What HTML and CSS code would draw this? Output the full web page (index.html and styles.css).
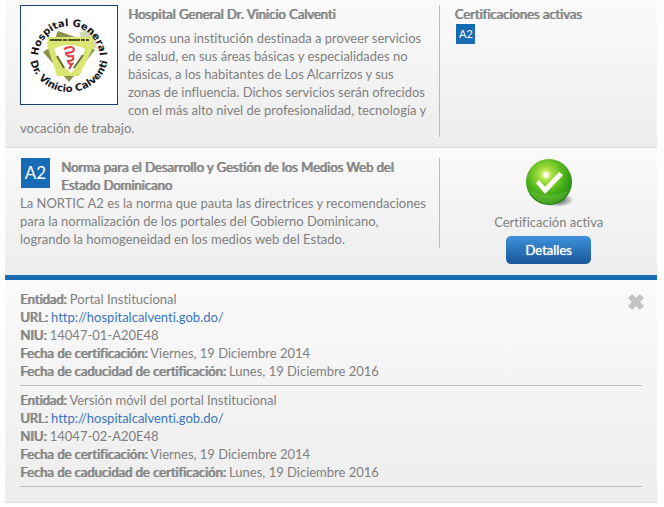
FILE: index.html
```html
<!DOCTYPE html>
<html lang="es">
<head>
    <meta charset="UTF-8">
    <meta name="viewport" content="width=device-width, initial-scale=1.0">
    <title>Hospital General Dr. Vinicio Calventi</title>
    <link rel="stylesheet" href="styles.css">
</head>
<body>

    <!-- Institution -->
    <section class="card institution">
        <div class="info">
            <svg class="logo" viewBox="0 0 96 98" role="img" aria-label="Hospital General Dr. Vinicio Calventi">
                <defs>
                    <path id="arc-top" d="M17 52 A31 32 0 1 1 79 52"/>
                    <path id="arc-bottom" d="M9 49 A39 37 0 0 0 87 49"/>
                </defs>
                <polygon points="58,26 72,24 76,42 66,44" fill="#d3d8b4"/>
                <polygon points="37,25 54,31 74,44 48,76 22,46 31,40" fill="#8b9148"/>
                <polygon points="27,31 71,31 73,40 58,70 36,70 26,39" fill="#dbe672"/>
                <path d="M33 43 Q48 35 64 43 Q60 58 50 67 Q38 58 33 43Z" fill="#fff"/>
                <path d="M43 43 Q51 39 53 43 Q53 47 45 47 Q45 51 52 50 Q54 55 47 55 Q48 59 51 58 L48 63" fill="none" stroke="#e23b42" stroke-width="2"/>
                <path d="M36 50 L43 62 M62 49 L53 62" stroke="#66702b" stroke-width="2"/>
                <path d="M29 34 H68" stroke="#4c5320" stroke-width="2" stroke-dasharray="12 1 4 1"/>
                <text class="logo-text"><textPath href="#arc-top" startOffset="50%" text-anchor="middle">Hospital General</textPath></text>
                <text class="logo-text"><textPath href="#arc-bottom" startOffset="50%" text-anchor="middle">Dr. Vinicio Calventi</textPath></text>
            </svg>
            <h2>Hospital General Dr. Vinicio Calventi</h2>
            <p>Somos una institución destinada a proveer servicios de salud, en sus áreas básicas y especialidades no básicas, a los habitantes de Los Alcarrizos y sus zonas de influencia. Dichos servicios serán ofrecidos con el más alto nivel de profesionalidad, tecnología y vocación de trabajo.</p>
        </div>
        <div class="side">
            <h2>Certificaciones activas</h2>
            <span class="badge badge-small">A2</span>
        </div>
    </section>

    <!-- Standard -->
    <section class="card norm">
        <div class="info">
            <div class="norm-title">
                <span class="badge">A2</span>
                <h2>Norma para el Desarrollo y Gestión de los Medios Web del Estado Dominicano</h2>
            </div>
            <p>La NORTIC A2 es la norma que pauta las directrices y recomendaciones para la normalización de los portales del Gobierno Dominicano, logrando la homogeneidad en los medios web del Estado.</p>
        </div>
        <div class="side status">
            <svg class="check" viewBox="0 0 50 50" aria-hidden="true">
                <defs>
                    <radialGradient id="ball" cx="0.43" cy="0.34" r="0.66">
                        <stop offset="0" stop-color="#f4ff9c"/>
                        <stop offset="0.25" stop-color="#9ddb3a"/>
                        <stop offset="0.6" stop-color="#4fb41c"/>
                        <stop offset="1" stop-color="#1f8213"/>
                    </radialGradient>
                    <radialGradient id="shade">
                        <stop offset="0" stop-color="#33363f"/>
                        <stop offset="1" stop-color="#33363f" stop-opacity="0"/>
                    </radialGradient>
                </defs>
                <ellipse cx="33" cy="42" rx="17" ry="7" fill="url(#shade)"/>
                <circle cx="25" cy="24" r="23" fill="url(#ball)"/>
                <path d="M5 32 Q25 42 45 32 Q39 45 25 46 Q11 45 5 32Z" fill="#8be04e" opacity="0.3"/>
                <circle cx="22" cy="17" r="3" fill="#fff" opacity="0.8"/>
                <path d="M12 25 L15 22 L21 29 L35 14 L39 17 L21 36Z" fill="#fff"/>
            </svg>
            <span>Certificación activa</span>
            <button type="button" class="btn" aria-controls="details" onclick="toggleDetails(true)">Detalles</button>
        </div>
    </section>

    <!-- Certification details -->
    <section class="details" id="details">
        <button type="button" class="close" aria-label="Cerrar" onclick="toggleDetails(false)">
            <svg viewBox="0 0 18 18" aria-hidden="true">
                <path d="M3 3 L15 15 M15 3 L3 15" stroke="#c4c4c4" stroke-width="6"/>
            </svg>
        </button>
        <ul>
            <li>
                <div><b>Entidad:</b> Portal Institucional</div>
                <div><b>URL:</b> <a href="http://hospitalcalventi.gob.do/">http://hospitalcalventi.gob.do/</a></div>
                <div><b>NIU:</b> 14047-01-A20E48</div>
                <div><b>Fecha de certificación:</b> Viernes, 19 Diciembre 2014</div>
                <div><b>Fecha de caducidad de certificación:</b> Lunes, 19 Diciembre 2016</div>
            </li>
            <li>
                <div><b>Entidad:</b> Versión móvil del portal Institucional</div>
                <div><b>URL:</b> <a href="http://hospitalcalventi.gob.do/">http://hospitalcalventi.gob.do/</a></div>
                <div><b>NIU:</b> 14047-02-A20E48</div>
                <div><b>Fecha de certificación:</b> Viernes, 19 Diciembre 2014</div>
                <div><b>Fecha de caducidad de certificación:</b> Lunes, 19 Diciembre 2016</div>
            </li>
        </ul>
    </section>

    <script>
        function toggleDetails(show) {
            document.getElementById("details").hidden = !show;
        }
    </script>

</body>
</html>
```
FILE: styles.css
```css
* {
    box-sizing: border-box;
}

body {
    margin: 0 7px 0 5px;
    font-family: Lato, sans-serif;
    font-size: 13px;
    line-height: 18px;
    font-variant-ligatures: none;
    color: #808080;
    background-color: #fff;
}

h2, p, ul {
    margin: 0;
    padding: 0;
}

/* Regular weight thickened with a shadow, keeps the regular widths */
h2, b {
    font-size: 13px;
    font-weight: 400;
    text-shadow: 1px 0 0 #909090;
}

/* Cards */
.card {
    display: flex;
    padding-left: 15px;
    background: linear-gradient(#fafafa, #ededed);
    border-bottom: 1px solid #dedede;
}

.info {
    flex: 0 0 66%;
    padding-right: 10px;
    border-right: 1px solid #bbb;
}

.side {
    flex: 1;
    padding-left: 14px;
}

.institution {
    padding-top: 5px;
    padding-bottom: 10px;
}

.institution p {
    margin-top: 6px;
}

.logo {
    float: left;
    width: 98px;
    height: 100px;
    margin-right: 10px;
    background-color: #fff;
    border: 1px solid #173f70;
}

.logo-text {
    font-family: "DejaVu Sans", sans-serif;
    font-size: 10px;
    font-weight: 700;
    fill: #151515;
}

/* Badges */
.badge {
    display: flex;
    flex-shrink: 0;
    align-items: center;
    justify-content: center;
    width: 29px;
    height: 30px;
    font-size: 17px;
    color: #fff;
    background-color: #176bb5;
}

.badge-small {
    width: 19px;
    height: 20px;
    margin-top: 1px;
    margin-left: 2px;
    font-size: 11px;
}

/* Standard */
.norm {
    align-items: flex-start;
    padding-top: 10px;
    padding-bottom: 11px;
    border-bottom: none;
}

.norm-title {
    display: flex;
    gap: 11px;
    padding: 0 0 0 1px;
}

.status {
    display: flex;
    flex-direction: column;
    align-items: center;
    padding-left: 0;
}

.check {
    width: 50px;
    height: 50px;
    margin-bottom: 5px;
}

.btn {
    width: 85px;
    height: 28px;
    margin-top: 5px;
    padding: 0;
    font: inherit;
    color: #fff;
    text-shadow: 0 0 1px #fff;
    background: linear-gradient(#3d93dc, #1b5698);
    border: none;
    border-radius: 5px;
    cursor: pointer;
}

/* Details */
.details {
    padding: 10px 15px 15px;
    background: linear-gradient(#fafafa, #ededed);
    border-top: 5px solid #176bb5;
    border-bottom: 1px solid #dedede;
}

.details ul {
    list-style: none;
}

.details li {
    padding-bottom: 5px;
    border-bottom: 1px solid #bbb;
}

.details li + li {
    padding-top: 5px;
}

.details a {
    color: #3a76c0;
    text-decoration: none;
}

.close {
    float: right;
    width: 18px;
    height: 18px;
    margin: 3px -3px 0 0;
    padding: 0;
    background: none;
    border: none;
    cursor: pointer;
}

.close svg {
    display: block;
}
```
